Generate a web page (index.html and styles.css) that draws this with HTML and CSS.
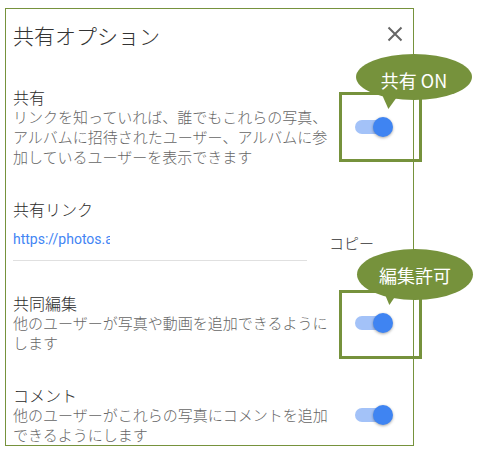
FILE: index.html
```html
<!DOCTYPE html>
<html lang="ja">
<head>
<meta charset="utf-8">
<title>共有オプション</title>
<link rel="stylesheet" href="styles.css">
</head>
<body>
<div class="panel">
  <div class="header">
    <div class="title">共有オプション</div>
    <svg class="close" width="16" height="16" viewBox="0 0 16 16" aria-label="閉じる"><path d="M1.5 1.5 L14.5 14.5 M14.5 1.5 L1.5 14.5" stroke="#666" stroke-width="2" fill="none"/></svg>
  </div>
  <div class="sections">
    <div class="row">
      <div class="text">
        <div class="label">共有</div>
        <div class="desc">リンクを知っていれば、誰でもこれらの写真、アルバムに招待されたユーザー、アルバムに参加しているユーザーを表示できます</div>
      </div>
      <div class="toggle"><span class="track"></span><span class="thumb"></span></div>
    </div>
    <div class="row link-row">
      <div class="link-col">
        <div class="label">共有リンク</div>
        <div class="input"><span class="url">https://photos.app.goo.gl/</span></div>
      </div>
      <div class="copy">コピー</div>
    </div>
    <div class="row">
      <div class="text">
        <div class="label">共同編集</div>
        <div class="desc">他のユーザーが写真や動画を追加できるようにします</div>
      </div>
      <div class="toggle"><span class="track"></span><span class="thumb"></span></div>
    </div>
    <div class="row">
      <div class="text">
        <div class="label">コメント</div>
        <div class="desc">他のユーザーがこれらの写真にコメントを追加できるようにします</div>
      </div>
      <div class="toggle"><span class="track"></span><span class="thumb"></span></div>
    </div>
  </div>
</div>

<div class="mark mark-share"></div>
<div class="mark mark-edit"></div>
<div class="bubble bubble-share">共有 ON</div>
<div class="bubble bubble-edit">編集許可</div>
</body>
</html>
```

FILE: styles.css
```css
html, body {
  margin: 0;
  padding: 0;
  background: #fff;
}
body {
  font-family: "Noto Sans CJK JP", "Noto Sans", sans-serif;
  font-weight: 300;
  color: #333;
}
.panel {
  box-sizing: border-box;
  margin: 8px 0 0 5px;
  width: 409px;
  height: 438px;
  border: 1px solid #76923c;
  overflow: hidden;
}
.header {
  height: 52px;
  display: flex;
  align-items: center;
  justify-content: space-between;
  padding: 0 10px 0 7px;
}
.title {
  font-size: 21px;
  line-height: 28px;
  color: #333;
}
.close {
  display: block;
  margin-top: -2px;
}
.sections {
  display: flex;
  flex-direction: column;
  gap: 32px;
  padding: 26px 0 0 7px;
}
.row {
  display: flex;
  align-items: center;
}
.text {
  width: 320px;
  flex: none;
}
.label {
  font-size: 16px;
  line-height: 20px;
  color: #2b2b2b;
}
.desc {
  font-size: 15px;
  line-height: 20px;
  color: #666;
}
.toggle {
  position: relative;
  width: 38px;
  height: 20px;
  margin-left: 22px;
  flex: none;
}
.track {
  position: absolute;
  left: 0;
  top: 3px;
  width: 34px;
  height: 14px;
  border-radius: 7px;
  background: #a3c2f8;
}
.thumb {
  position: absolute;
  left: 18px;
  top: 0;
  width: 20px;
  height: 20px;
  border-radius: 50%;
  background: #3f84f2;
  box-shadow: 0 1px 3px rgba(0, 0, 0, 0.35);
}
.link-row {
  align-items: flex-end;
}
.link-col {
  width: 294px;
  flex: none;
}
.input {
  padding: 10px 0 11px;
  border-bottom: 1px solid #e0e0e0;
}
.url {
  display: block;
  width: 97px;
  overflow: hidden;
  white-space: nowrap;
  font-family: Roboto, "Liberation Sans", sans-serif;
  font-weight: 400;
  font-size: 14px;
  line-height: 20px;
  color: #4285f4;
}
.copy {
  margin-left: 22px;
  margin-bottom: 8px;
  font-size: 15px;
  line-height: 20px;
  color: #333;
}
.mark {
  position: absolute;
  left: 339px;
  width: 83px;
  box-sizing: border-box;
  border: 3px solid #76923c;
}
.mark-share {
  top: 92px;
  height: 70px;
}
.mark-edit {
  top: 290px;
  height: 69px;
}
.bubble {
  position: absolute;
  width: 116px;
  border-radius: 50%;
  background: #76923c;
  color: #fff;
  font-weight: 400;
  font-size: 18px;
  line-height: 24px;
  display: flex;
  align-items: center;
  justify-content: center;
}
.bubble::after {
  content: "";
  position: absolute;
  left: 24px;
  top: 36px;
  width: 22px;
  height: 20px;
  background: #76923c;
  clip-path: polygon(0 0, 100% 0, 38% 100%);
}
.bubble-share {
  left: 356px;
  top: 54px;
  height: 46px;
  padding-top: 5px;
  box-sizing: border-box;
}
.bubble-share::after {
  height: 19px;
}
.bubble-edit {
  left: 357px;
  top: 249px;
  height: 51px;
}
```
